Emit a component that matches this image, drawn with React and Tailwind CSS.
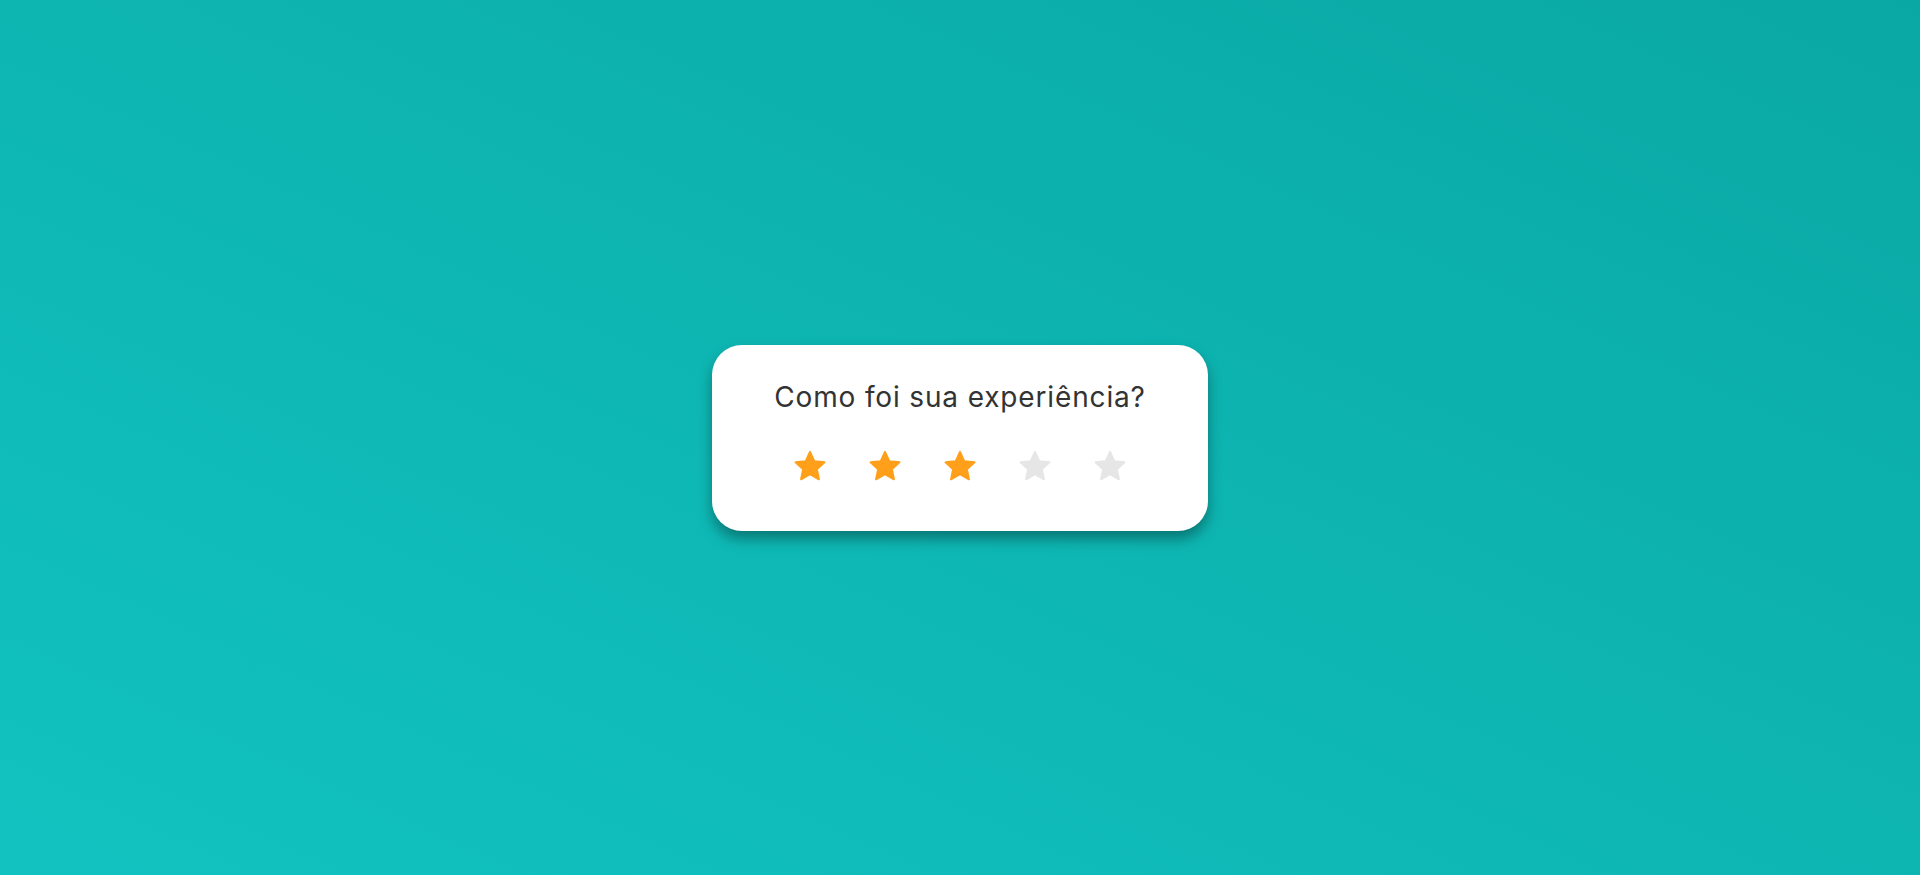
import React from "react";

function Star({ filled }) {
  const cx = 16, cy = 17;
  const R = 15.2, r = 7.2;
  const pts = [];
  for (let i = 0; i < 10; i++) {
    const rad = i % 2 === 0 ? R : r;
    const a = (Math.PI / 5) * i - Math.PI / 2;
    pts.push(`${(cx + rad * Math.cos(a)).toFixed(2)},${(cy + rad * Math.sin(a)).toFixed(2)}`);
  }
  const color = filled ? "#ff9f1a" : "#e6e6e6";
  return (
    <svg width="32" height="32" viewBox="0 0 32 32" className="block">
      <polygon points={pts.join(" ")} fill={color} stroke={color} strokeWidth="2" strokeLinejoin="round" />
    </svg>
  );
}

export default function App() {
  return (
    <div className="h-[875px] w-full flex items-center justify-center bg-[linear-gradient(to_top_right,#11c3c0,#0aa8a4)]">
      <div className="w-[496px] h-[186px] rounded-[30px] bg-white shadow-[0_8px_14px_rgba(0,0,0,0.35)] flex flex-col items-center pt-[38px]">
        <div className="text-[28px] leading-[28px] text-[#333333] font-['Inter',sans-serif] tracking-[0.85px]">
          Como foi sua experiência?
        </div>
        <div className="flex gap-[43px] mt-[39px]">
          <Star filled />
          <Star filled />
          <Star filled />
          <Star />
          <Star />
        </div>
      </div>
    </div>
  );
}
